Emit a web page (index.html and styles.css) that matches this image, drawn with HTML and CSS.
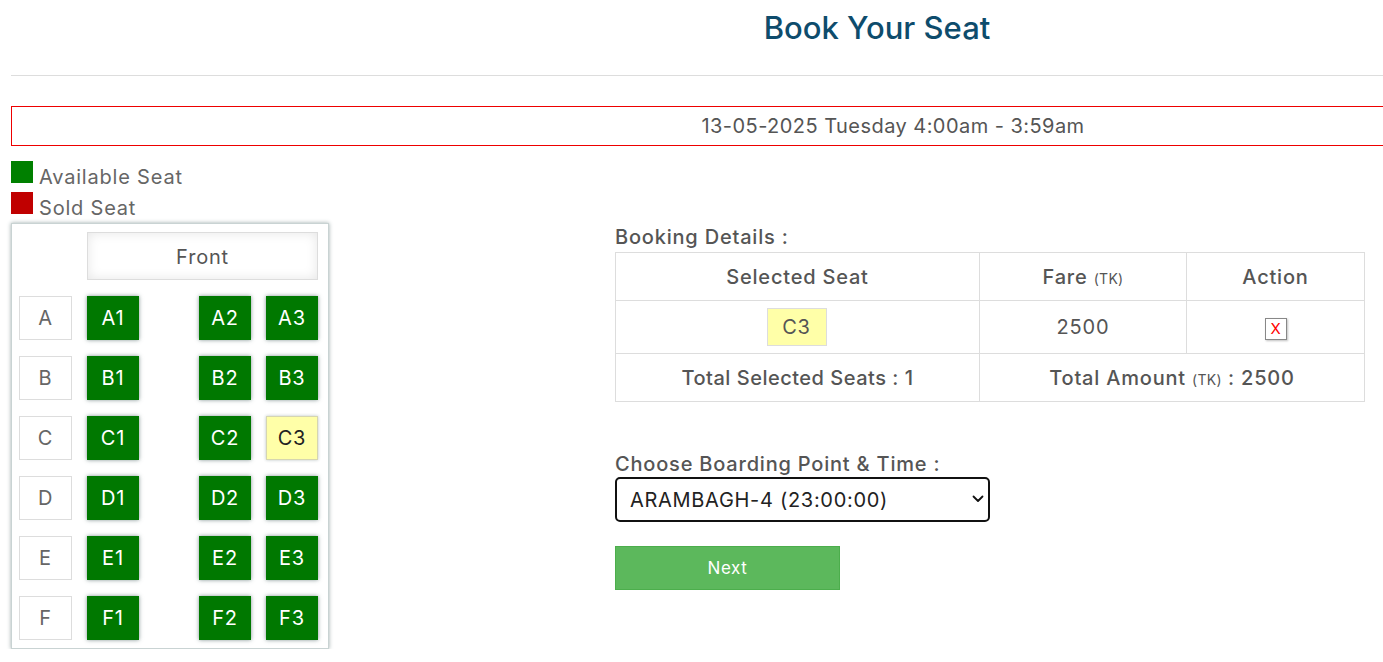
FILE: index.html
```html
<!DOCTYPE html>
<html lang="en">
<head>
<meta charset="utf-8">
<title>Book Your Seat</title>
<link rel="stylesheet" href="styles.css">
</head>
<body>
<div class="page">
  <h2 class="title">Book Your Seat</h2>
  <hr class="rule">
  <div class="date-bar">13-05-2025 Tuesday 4:00am - 3:59am</div>
  <div class="legend">
    <div class="legend-item"><span class="swatch swatch-green"></span><span>Available Seat</span></div>
    <div class="legend-item"><span class="swatch swatch-red"></span><span>Sold Seat</span></div>
  </div>
  <div class="main">
    <div class="seat-map">
      <div class="front">Front</div>
      <div class="row-label">A</div><div class="seat">A1</div><div class="aisle"></div><div class="seat">A2</div><div class="seat">A3</div>
      <div class="row-label">B</div><div class="seat">B1</div><div class="aisle"></div><div class="seat">B2</div><div class="seat">B3</div>
      <div class="row-label">C</div><div class="seat">C1</div><div class="aisle"></div><div class="seat">C2</div><div class="seat seat-selected">C3</div>
      <div class="row-label">D</div><div class="seat">D1</div><div class="aisle"></div><div class="seat">D2</div><div class="seat">D3</div>
      <div class="row-label">E</div><div class="seat">E1</div><div class="aisle"></div><div class="seat">E2</div><div class="seat">E3</div>
      <div class="row-label">F</div><div class="seat">F1</div><div class="aisle"></div><div class="seat">F2</div><div class="seat">F3</div>
    </div>
    <div class="booking">
      <div class="section-label">Booking Details :</div>
      <table class="details">
        <tr class="head-row">
          <th class="col-seat">Selected Seat</th>
          <th class="col-fare">Fare <span class="unit">(TK)</span></th>
          <th class="col-action">Action</th>
        </tr>
        <tr class="item-row">
          <td><span class="chip">C3</span></td>
          <td>2500</td>
          <td><span class="remove">X</span></td>
        </tr>
        <tr class="total-row">
          <th>Total Selected Seats : 1</th>
          <th colspan="2" class="total-amount">Total Amount <span class="unit">(TK)</span> : 2500</th>
        </tr>
      </table>
      <div class="section-label boarding-label">Choose Boarding Point &amp; Time :</div>
      <div class="select-wrap">
        <select class="select">
          <option>ARAMBAGH-4 (23:00:00)</option>
        </select>
        <svg class="chevron" width="12" height="8" viewBox="0 0 12 8"><path d="M1.5 1.5 L6 6 L10.5 1.5" fill="none" stroke="#111" stroke-width="1.8" stroke-linecap="round" stroke-linejoin="round"/></svg>
      </div>
      <button class="next-btn">Next</button>
    </div>
  </div>
</div>
</body>
</html>
```
FILE: styles.css
```css
html, body {
  margin: 0;
  padding: 0;
  background: #fff;
  overflow: hidden;
}
body {
  font-family: Inter, "Open Sans", sans-serif;
  color: #555;
  letter-spacing: 0.8px;
}
.page {
  padding-left: 11px;
  width: 1764px;
}
.title {
  margin: 0;
  padding-top: 10px;
  width: 1732px;
  text-align: center;
  font-size: 31px;
  line-height: 36px;
  font-weight: 500;
  letter-spacing: 0;
  color: #0e4c6c;
}
.rule {
  margin: 29px 0 0;
  border: 0;
  border-top: 1px solid #ddd;
  height: 0;
}
.date-bar {
  margin-top: 30px;
  border: 1px solid #e00;
  height: 38px;
  line-height: 38px;
  text-align: center;
  font-size: 20px;
  letter-spacing: 0.45px;
  color: #555;
}
.legend {
  margin-top: 15px;
}
.legend-item {
  display: flex;
  align-items: flex-start;
  height: 31px;
  font-size: 20px;
  line-height: 22px;
  color: #666;
}
.legend-item span:last-child {
  padding-top: 5px;
}
.swatch {
  width: 22px;
  height: 22px;
  margin-right: 6px;
  flex: none;
}
.swatch-green { background: #008000; }
.swatch-red { background: #c00000; }

.main {
  display: flex;
  align-items: flex-start;
}
.seat-map {
  width: 299px;
  padding: 8px 10px 8px 7px;
  border: 1px solid #c9d3d3;
  box-shadow: 0 0 4px rgba(40, 70, 70, 0.45);
  display: grid;
  grid-template-columns: 53px 52px 30px 52px 52px;
  grid-template-rows: 48px repeat(6, 44px);
  column-gap: 15px;
  row-gap: 16px;
}
.front {
  grid-column: 2 / 6;
  border: 1px solid #ddd;
  background: #fff;
  box-shadow: inset 0 0 12px #e6e6e6;
  display: flex;
  align-items: center;
  justify-content: center;
  padding-top: 2px;
  font-size: 20px;
  color: #555;
}
.row-label {
  border: 1px solid #ddd;
  display: flex;
  align-items: center;
  justify-content: center;
  font-size: 20px;
  color: #666;
}
.seat {
  background: #007800;
  color: #fff;
  display: flex;
  align-items: center;
  justify-content: center;
  font-size: 20px;
  box-shadow: 0 0 4px rgba(30, 60, 60, 0.55);
}
.seat-selected {
  background: #ffffa8;
  color: #222;
  border: 1px solid #d6d6b0;
  box-shadow: 0 0 3px rgba(30, 60, 60, 0.3);
}

.booking {
  margin-left: 286px;
  padding-top: 2px;
  width: 750px;
}
.section-label {
  font-size: 20px;
  line-height: 24px;
  font-weight: 500;
  color: #555;
}
.details {
  margin-top: 3px;
  width: 750px;
  border-collapse: collapse;
  font-size: 20px;
  color: #555;
}
.details th, .details td {
  border: 1px solid #ddd;
  text-align: center;
  padding: 0;
}
.details th { font-weight: 500; }
.col-seat { width: 363px; }
.col-fare { width: 206px; }
.head-row { height: 48px; }
.item-row { height: 53px; }
.total-row { height: 48px; }
.total-row th { letter-spacing: 0.5px; }
.total-row .total-amount { letter-spacing: 0.8px; }
.unit { font-size: 14px; font-weight: 400; letter-spacing: 0.3px; }
.chip {
  display: inline-flex;
  align-items: center;
  justify-content: center;
  width: 58px;
  height: 36px;
  background: #ffffa8;
  border: 1px solid #ddd;
  vertical-align: middle;
  margin-right: 2px;
}
.remove {
  display: inline-flex;
  align-items: center;
  justify-content: center;
  width: 20px;
  height: 20px;
  border: 1px solid #888;
  box-shadow: 1px 1px 2px rgba(0, 0, 0, 0.25);
  color: #f00;
  font-size: 15px;
  font-weight: 400;
  letter-spacing: 0;
  background: #fff;
  vertical-align: middle;
  margin-top: 2px;
}
.boarding-label {
  margin-top: 50px;
}
.select-wrap {
  position: relative;
  margin-top: 1px;
  width: 375px;
}
.select {
  display: block;
  appearance: none;
  -webkit-appearance: none;
  width: 375px;
  height: 45px;
  border: 2px solid #111;
  border-radius: 5px;
  background: #fff;
  padding: 0 0 0 13px;
  font-family: Inter, "Open Sans", sans-serif;
  font-size: 20px;
  letter-spacing: 0.7px;
  color: #222;
  outline: none;
}
.chevron {
  position: absolute;
  right: 6px;
  top: 18px;
}
.next-btn {
  display: block;
  margin-top: 24px;
  width: 225px;
  height: 44px;
  border: 1px solid #4cae4c;
  background: #5cb85c;
  color: #fff;
  font-family: Inter, "Open Sans", sans-serif;
  font-size: 17px;
  letter-spacing: 0.6px;
  cursor: pointer;
}
```
